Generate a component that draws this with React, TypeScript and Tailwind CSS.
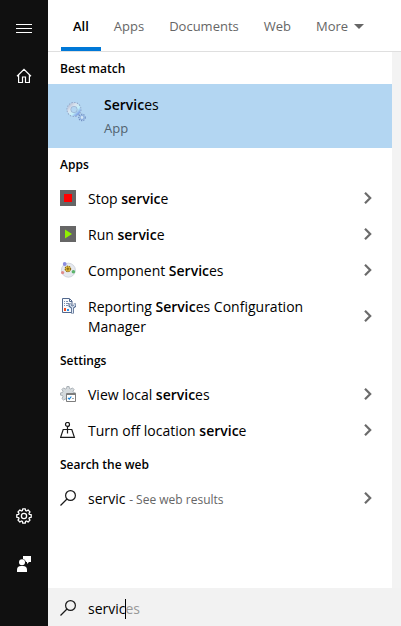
import { useState, type ReactNode } from 'react';

function SearchIcon() {
  return (
    <svg className="size-4 shrink-0" viewBox="0 0 16 16" fill="none" stroke="#1a1a1a" strokeWidth="1.2" aria-hidden="true">
      <circle cx="10.5" cy="5.5" r="4.9" />
      <path d="M7 9 .5 15.5" />
    </svg>
  );
}

function ServicesIcon() {
  return (
    <svg className="mt-2 size-6 shrink-0 self-start" viewBox="0 0 24 24" fill="none" aria-hidden="true">
      <defs>
        <linearGradient id="gear" x1="0" y1="0" x2="1" y2="1">
          <stop offset="0" stopColor="#b4bfd6" />
          <stop offset=".3" stopColor="#dbe3ee" />
          <stop offset=".65" stopColor="#c3f0fa" />
          <stop offset="1" stopColor="#6f8fe0" />
        </linearGradient>
      </defs>
      <circle cx="10" cy="9.5" r="6.9" stroke="#8ea0c2" strokeWidth="1.2" strokeDasharray="1.4 1.3" />
      <circle cx="10" cy="9.5" r="5" stroke="url(#gear)" strokeWidth="3.4" />
      <circle cx="10" cy="9.5" r="3.2" stroke="#92a6c6" strokeWidth=".6" />
      <circle cx="18" cy="17.5" r="3.2" stroke="#6f8cc0" strokeWidth="1.2" strokeDasharray="1.3 1" />
      <circle cx="18" cy="17.5" r="2" fill="#d4e8f6" stroke="#8fb0df" strokeWidth="1.2" />
    </svg>
  );
}

function StopIcon() {
  return (
    <svg className="size-4 shrink-0" viewBox="0 0 16 16" aria-hidden="true">
      <path fill="#666" d="M0 0h16v16H0z" />
      <path fill="#f00" d="M4 4h8v8H4z" />
    </svg>
  );
}

function RunIcon() {
  return (
    <svg className="size-4 shrink-0" viewBox="0 0 16 16" aria-hidden="true">
      <path fill="#666" d="M0 0h16v16H0z" />
      <path fill="#90ee02" d="M5 3.5 12 8l-7 4.5z" />
    </svg>
  );
}

function ComponentIcon() {
  return (
    <svg className="size-4 shrink-0" viewBox="0 0 16 16" aria-hidden="true">
      <circle cx="8.4" cy="8.2" r="7" fill="#e6e9ef" stroke="#c9ced8" strokeWidth=".8" />
      <circle cx="4.7" cy="2" r="1.9" fill="#8b8ce0" />
      <circle cx="2.6" cy="10.6" r="1.6" fill="#e08a8b" />
      <circle cx="13.4" cy="9.8" r="1.8" fill="#5cb46c" />
      <circle cx="7.9" cy="6.9" r="2.7" fill="#f9d748" stroke="#8f6a14" strokeWidth="1.2" strokeDasharray="1.5 .7" />
      <path stroke="#6b4c08" strokeWidth=".9" d="M7.9 5.2v3.4M6.2 6.9h3.4" />
    </svg>
  );
}

function ReportIcon() {
  return (
    <svg className="size-4 shrink-0" viewBox="0 0 16 16" fill="none" aria-hidden="true">
      <path fill="#f7fafd" stroke="#52688d" d="M2.5.5h7l2.5 2.5v11.5H2.5z" />
      <path stroke="#52688d" d="M9.5 1v2.5H12" />
      <path stroke="#7f92b0" d="M4 3.5h1M6 3.5h2M4 5.5h1M6 5.5h3M4 7.5h1M6 7.5h2" />
      <path fill="#f04e23" d="M4 10h2v3H4z" />
      <path fill="#2a8be0" d="M7 11h2v2H7z" />
      <path stroke="#52688d" strokeWidth="2.8" d="M12.5 9v6.5M9.9 5.5v2.2l2.6 2 2.6-2V5.5" />
      <path stroke="#dfe9f5" strokeWidth="1.2" d="M12.5 9.5V15M10.2 6v1.4l2.3 2 2.3-2V6" />
    </svg>
  );
}

function LocalServicesIcon() {
  return (
    <svg className="size-4 shrink-0" viewBox="0 0 16 16" fill="none" aria-hidden="true">
      <path
        fill="#d5dadd"
        stroke="#9aa2a8"
        strokeWidth=".8"
        d="M6.9.5h2.2l.4 2 1.3.5 1.7-1.1 1.6 1.6L13 5.2l.5 1.3 2 .4v2.2l-2 .4-.5 1.3 1.1 1.7-1.6 1.6-1.7-1.1-1.3.5-.4 2H6.9l-.4-2-1.3-.5-1.7 1.1-1.6-1.6L3 10.8l-.5-1.3-2-.4V6.9l2-.4L3 5.2 1.9 3.5l1.6-1.6L5.2 3l1.3-.5z"
      />
      <path fill="#fff" stroke="#7d7d7d" d="M6.5 7.5h9v8h-9z" />
      <path stroke="#7d7d7d" d="M6 8.5h10" />
      <path stroke="#1683d8" strokeWidth="1.2" d="m8 11.8 1.3 1.3 2-2.6" />
      <path stroke="#a5a5a5" d="M12 12.5h2" />
    </svg>
  );
}

function LocationIcon() {
  return (
    <svg className="size-4 shrink-0" viewBox="0 0 16 16" fill="none" stroke="#1a1a1a" strokeWidth="1.2" aria-hidden="true">
      <circle cx="7.5" cy="2.4" r="2" />
      <path d="M7.5 4.4v7.1M3.2 7.5h8.6l2.6 7.9H.6z" />
    </svg>
  );
}

function Chevron() {
  return (
    <svg className="h-3 w-2 shrink-0" viewBox="0 0 8 12" fill="none" stroke="#6b6b6b" strokeWidth="2.2" aria-hidden="true">
      <path d="m1 .8 5.2 5.2L1 11.2" />
    </svg>
  );
}

function Heading({ children }: { children: ReactNode }) {
  return <h2 className="px-3 pt-[9px] pb-[7px] text-xs leading-4 font-semibold">{children}</h2>;
}

function Row({ icon, children }: { icon: ReactNode; children: ReactNode }) {
  return (
    <button type="button" className="flex w-full items-center gap-3 pt-[9px] pr-5 pb-[7px] pl-3 text-left text-sm leading-5">
      <span className="self-start pt-px">{icon}</span>
      <span className="max-w-60 flex-1">{children}</span>
      <span className="ml-auto pb-0.5">
        <Chevron />
      </span>
    </button>
  );
}

function B({ children }: { children: ReactNode }) {
  return <b className="font-semibold">{children}</b>;
}

const tabs = ['All', 'Apps', 'Documents', 'Web', 'More'];

export default function App() {
  const [query, setQuery] = useState('servic');
  const [tab, setTab] = useState('All');

  return (
    <div className="flex min-h-screen bg-white font-['Open_Sans','Noto_Sans',sans-serif] text-black">
      <aside className="flex w-12 shrink-0 flex-col items-center bg-[#101010] text-white">
        <button type="button" aria-label="Menu" className="grid h-14 w-full place-items-center">
          <svg className="size-4" viewBox="0 0 16 16" stroke="currentColor" aria-hidden="true">
            <path d="M0 4.5h16M0 8.5h16M0 12.5h16" />
          </svg>
        </button>
        <button type="button" aria-label="Home" className="grid h-10 w-full place-items-center">
          <svg className="size-4" viewBox="0 0 16 16" fill="none" stroke="currentColor" strokeWidth="1.2" aria-hidden="true">
            <path d="M1 8.2 8 1.3l7 6.9M2.6 7v7.5h3.9V9h3v5.5h3.9V7" />
          </svg>
        </button>
        <button type="button" aria-label="Settings" className="mt-auto grid h-12 w-full place-items-center">
          <svg className="size-4" viewBox="0 0 16 16" fill="none" stroke="currentColor" strokeWidth="1.3" strokeLinejoin="round" aria-hidden="true">
            <path d="m6.7.8-.3 1.8-1 .4L3.9 2 2 3.9l1 1.5-.4 1-1.8.3v2.6l1.8.3.4 1L2 12.1 3.9 14l1.5-1 1 .4.3 1.8h2.6l.3-1.8 1-.4 1.5 1 1.9-1.9-1-1.5.4-1 1.8-.3V6.7l-1.8-.3-.4-1 1-1.5L12.1 2l-1.5 1-1-.4L9.3.8z" />
            <circle cx="8" cy="8" r="2.6" />
          </svg>
        </button>
        <button type="button" aria-label="Feedback" className="mb-[38px] grid h-12 w-full place-items-center">
          <svg className="size-4" viewBox="0 0 16 16" fill="currentColor" aria-hidden="true">
            <path d="M7 0h8v6h-2l-2 2V6h-1A4 4 0 0 0 7 3z" />
            <circle cx="6" cy="6.2" r="3" />
            <path d="M1 16v-2a4 4 0 0 1 4-4h2a4 4 0 0 1 4 4v2z" />
          </svg>
        </button>
      </aside>

      <div className="flex min-w-0 flex-1 flex-col">
        <nav className="flex gap-px border-b border-[#dfdfdf] px-[13px] text-[13px] leading-5 text-[#666]">
          {tabs.map((name) => (
            <button
              key={name}
              type="button"
              onClick={() => setTab(name)}
              className={
                name === tab
                  ? 'flex items-center border-b-4 border-[#0078d7] px-3 pt-4 pb-[11px] font-semibold text-black'
                  : 'flex items-center gap-1.5 border-b-4 border-transparent px-3 pt-4 pb-[11px]'
              }
            >
              {name}
              {name === 'More' && (
                <svg className="h-[5px] w-2.5" viewBox="0 0 10 5" fill="currentColor" aria-hidden="true">
                  <path d="M0 0h10L5 5z" />
                </svg>
              )}
            </button>
          ))}
        </nav>

        <div className="flex flex-1">
          <main className="min-w-0 flex-1">
            <Heading>Best match</Heading>
            <button type="button" className="flex w-full items-center gap-4 bg-[#b3d6f2] px-4 pt-2 pb-2.5 text-left">
              <ServicesIcon />
              <span className="flex flex-col">
                <span className="text-sm leading-[26px]">
                  <B>Servic</B>es
                </span>
                <span className="text-[13px] leading-5 text-[#51626f]">App</span>
              </span>
            </button>

            <Heading>Apps</Heading>
            <Row icon={<StopIcon />}>
              Stop <B>servic</B>e
            </Row>
            <Row icon={<RunIcon />}>
              Run <B>servic</B>e
            </Row>
            <Row icon={<ComponentIcon />}>
              Component <B>Servic</B>es
            </Row>
            <Row icon={<ReportIcon />}>
              Reporting <B>Servic</B>es Configuration Manager
            </Row>

            <Heading>Settings</Heading>
            <Row icon={<LocalServicesIcon />}>
              View local <B>servic</B>es
            </Row>
            <Row icon={<LocationIcon />}>
              Turn off location <B>servic</B>e
            </Row>

            <Heading>Search the web</Heading>
            <Row icon={<SearchIcon />}>
              servic <span className="text-xs text-[#666]">- See web results</span>
            </Row>
          </main>
          <div className="w-[9px] shrink-0 bg-[#f3f3f3]" />
        </div>

        <label className="flex h-[38px] items-center gap-3 bg-[#f2f2f2] px-3 pt-0.5 text-sm leading-5">
          <SearchIcon />
          <span className="flex pt-0.5">
            <input
              type="text"
              aria-label="Search"
              value={query}
              onChange={(e) => setQuery(e.target.value)}
              className="field-sizing-content bg-transparent outline-none"
            />
            <span className="-ml-px h-5 w-px bg-black" />
            {query === 'servic' && <span className="text-[#999]">es</span>}
          </span>
        </label>
      </div>
    </div>
  );
}
